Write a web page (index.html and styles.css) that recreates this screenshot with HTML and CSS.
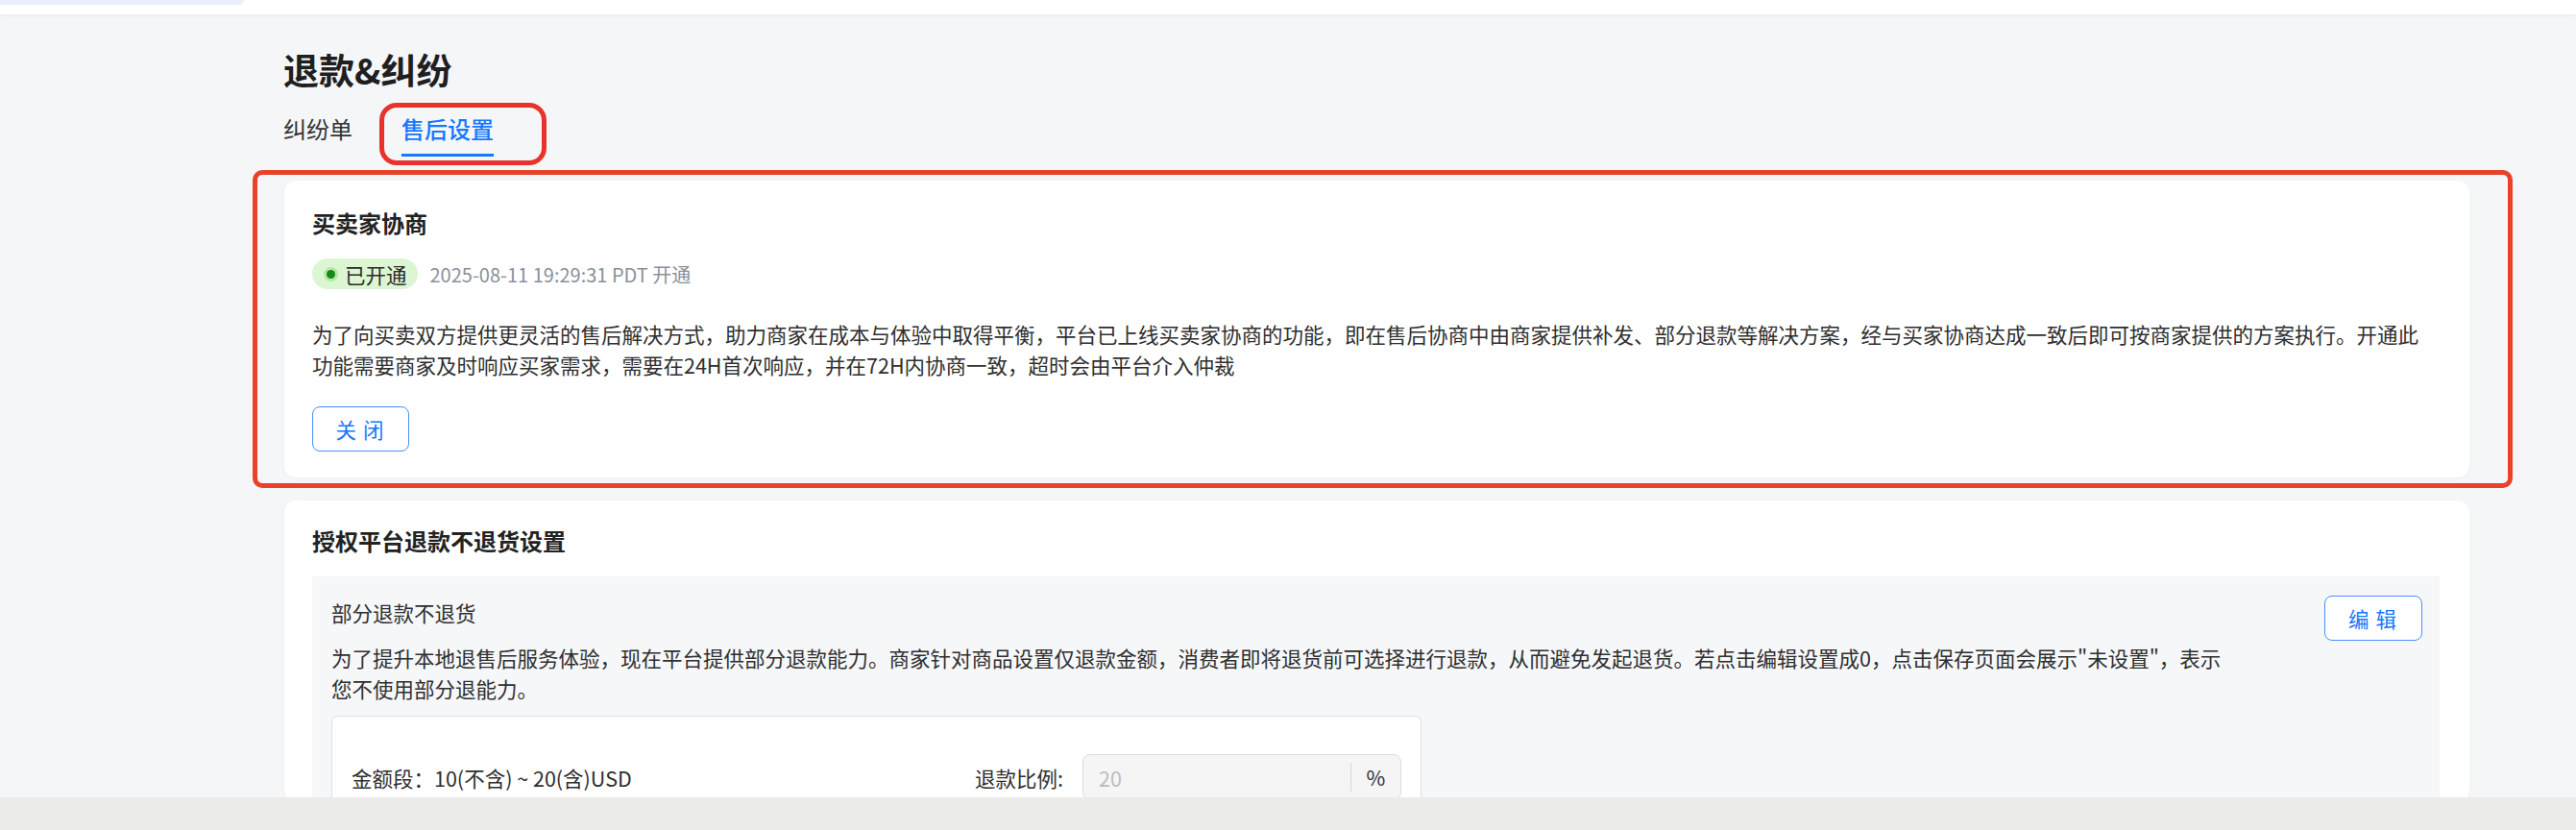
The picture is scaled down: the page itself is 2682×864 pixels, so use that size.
FILE: index.html
```html
<!DOCTYPE html>
<html lang="zh-CN">
<head>
<meta charset="utf-8">
<title>退款&amp;纠纷</title>
<link rel="stylesheet" href="styles.css">
</head>
<body>
<div class="topbar"><div class="topbar-tab"></div></div>
<main class="main">
  <h1 class="page-title">退款&amp;纠纷</h1>
  <nav class="tabs">
    <span class="tab">纠纷单</span>
    <span class="tab tab-active">售后设置</span>
  </nav>

  <section class="card card-nego">
    <h2 class="card-title">买卖家协商</h2>
    <div class="status-row">
      <span class="pill"><span class="dot"></span>已开通</span>
      <span class="stamp">2025-08-11 19:29:31 PDT 开通</span>
    </div>
    <p class="desc desc-nego">为了向买卖双方提供更灵活的售后解决方式，助力商家在成本与体验中取得平衡，平台已上线买卖家协商的功能，即在售后协商中由商家提供补发、部分退款等解决方案，经与买家协商达成一致后即可按商家提供的方案执行。开通此功能需要商家及时响应买家需求，需要在24H首次响应，并在72H内协商一致，超时会由平台介入仲裁</p>
    <button class="btn">关闭</button>
  </section>

  <section class="card card-refund">
    <h2 class="card-title">授权平台退款不退货设置</h2>
    <div class="panel">
      <div class="panel-body">
        <div class="panel-sub">部分退款不退货</div>
        <p class="desc desc-panel">为了提升本地退售后服务体验，现在平台提供部分退款能力。商家针对商品设置仅退款金额，消费者即将退货前可选择进行退款，从而避免发起退货。若点击编辑设置成0，点击保存页面会展示"未设置"，表示您不使用部分退能力。</p>
        <div class="tier-box">
          <div class="tier-row">
            <span class="tier-range">金额段：10(不含) ~ 20(含)USD</span>
            <div class="tier-field">
              <span class="tier-label">退款比例:</span>
              <div class="input">
                <span class="input-value">20</span>
                <span class="input-suffix">%</span>
              </div>
            </div>
          </div>
        </div>
      </div>
      <button class="btn btn-edit">编辑</button>
    </div>
  </section>
</main>

<div class="mark mark-tab"></div>
<div class="mark mark-card"></div>
<div class="hscroll"></div>
</body>
</html>
```

FILE: styles.css
```css
* { box-sizing: border-box; }

html, body {
  margin: 0;
  padding: 0;
}

body {
  background: #f5f6f8;
  font-family: "Noto Sans CJK SC", "Noto Sans", sans-serif;
  color: #333;
  width: 2682px;
  height: 864px;
  overflow: hidden;
}

.topbar {
  height: 15px;
  background: #fff;
  box-shadow: 0 1px 3px rgba(0, 0, 0, 0.06);
}

.topbar-tab {
  width: 254px;
  height: 5px;
  background: #e9f0fb;
  border-radius: 0 0 6px 0;
}

.main {
  margin-left: 296px;
  width: 2275px;
}

.page-title {
  margin: 34px 0 0 -1px;
  font-size: 37px;
  line-height: 46px;
  font-weight: 700;
  color: #1f1f1f;
}

.tabs {
  display: flex;
  gap: 51px;
  margin-top: 23px;
  margin-left: -1px;
}

.tab {
  font-size: 24px;
  line-height: 32px;
  padding-bottom: 10px;
  color: #333;
  border-bottom: 3px solid transparent;
}

.tab-active {
  color: #1677ff;
  font-weight: 500;
  border-bottom-color: #1677ff;
}

.card {
  background: #fff;
  border-radius: 12px;
  box-shadow: 0 1px 4px rgba(0, 0, 0, 0.03);
}

.card-nego {
  margin-top: 25px;
  padding: 28px 29px 27px;
}

.card-refund {
  margin-top: 24px;
  padding: 26px 32px 0 29px;
}

.card-title {
  margin: 0;
  font-size: 24px;
  line-height: 32px;
  font-weight: 700;
  color: #222;
}

.status-row {
  display: flex;
  align-items: center;
  gap: 13px;
  margin-top: 21px;
}

.pill {
  display: inline-flex;
  align-items: center;
  height: 32px;
  padding: 0 11px 0 15px;
  border-radius: 16px;
  background: #dcf6d4;
  font-size: 21.5px;
  color: #2c2c2c;
}

.dot {
  width: 9px;
  height: 9px;
  border-radius: 50%;
  background: #168a16;
  box-shadow: 0 0 0 3px #b5e8a8;
  margin-right: 10px;
}

.stamp {
  font-size: 20px;
  color: #8a919c;
}

.desc {
  margin: 0;
  font-size: 21.5px;
  line-height: 32px;
  color: #2f2f2f;
}

.desc-nego {
  margin-top: 31px;
  max-width: 2205px;
}

.btn {
  display: inline-flex;
  align-items: center;
  justify-content: center;
  width: 101px;
  height: 47px;
  padding: 0 0 0 5px;
  border: 1.5px solid #4a8ff7;
  border-radius: 8px;
  background: #fff;
  color: #1677ff;
  font-family: inherit;
  font-size: 21.5px;
  letter-spacing: 7px;
  margin-top: 27px;
}

.panel {
  display: flex;
  justify-content: space-between;
  align-items: flex-start;
  margin-top: 21px;
  width: 2215px;
  padding: 20px 18px 0 20px;
  background: #f6f7f9;
}

.panel-body {
  padding-top: 2px;
}

.panel-sub {
  font-size: 21.5px;
  line-height: 32px;
  color: #2f2f2f;
}

.desc-panel {
  margin-top: 15px;
  max-width: 1975px;
}

.btn-edit {
  margin-top: 0;
  width: 102px;
}

.tier-box {
  margin-top: 12px;
  width: 1135px;
  height: 90px;
  padding: 39px 20px 0 20px;
  background: #fff;
  border: 1px solid #dcdfe5;
  border-bottom: 0;
  border-radius: 6px 6px 0 0;
}

.tier-row {
  display: flex;
  justify-content: space-between;
  align-items: center;
}

.tier-range {
  font-size: 21.5px;
  color: #2f2f2f;
}

.tier-field {
  display: flex;
  align-items: center;
  gap: 20px;
}

.tier-label {
  font-size: 21.5px;
  color: #2f2f2f;
}

.input {
  display: flex;
  align-items: center;
  width: 332px;
  height: 48px;
  background: #f5f5f5;
  border: 1px solid #dcdcdc;
  border-radius: 8px;
  font-size: 21.5px;
}

.input-value {
  flex: 1;
  padding-left: 16px;
  color: #bdbdbd;
}

.input-suffix {
  width: 52px;
  height: 30px;
  line-height: 30px;
  border-left: 1px solid #d6d6d6;
  text-align: center;
  color: #333;
}

.mark {
  position: absolute;
  border: 5px solid #e9322b;
}

.mark-tab {
  left: 395px;
  top: 107px;
  width: 174px;
  height: 65px;
  border-radius: 18px;
}

.mark-card {
  left: 263px;
  top: 177px;
  width: 2353px;
  height: 331px;
  border-radius: 10px;
  border-color: #ea4229;
}

.hscroll {
  position: fixed;
  left: 0;
  right: 0;
  bottom: 0;
  height: 34px;
  background: #ebebe9;
}
```
